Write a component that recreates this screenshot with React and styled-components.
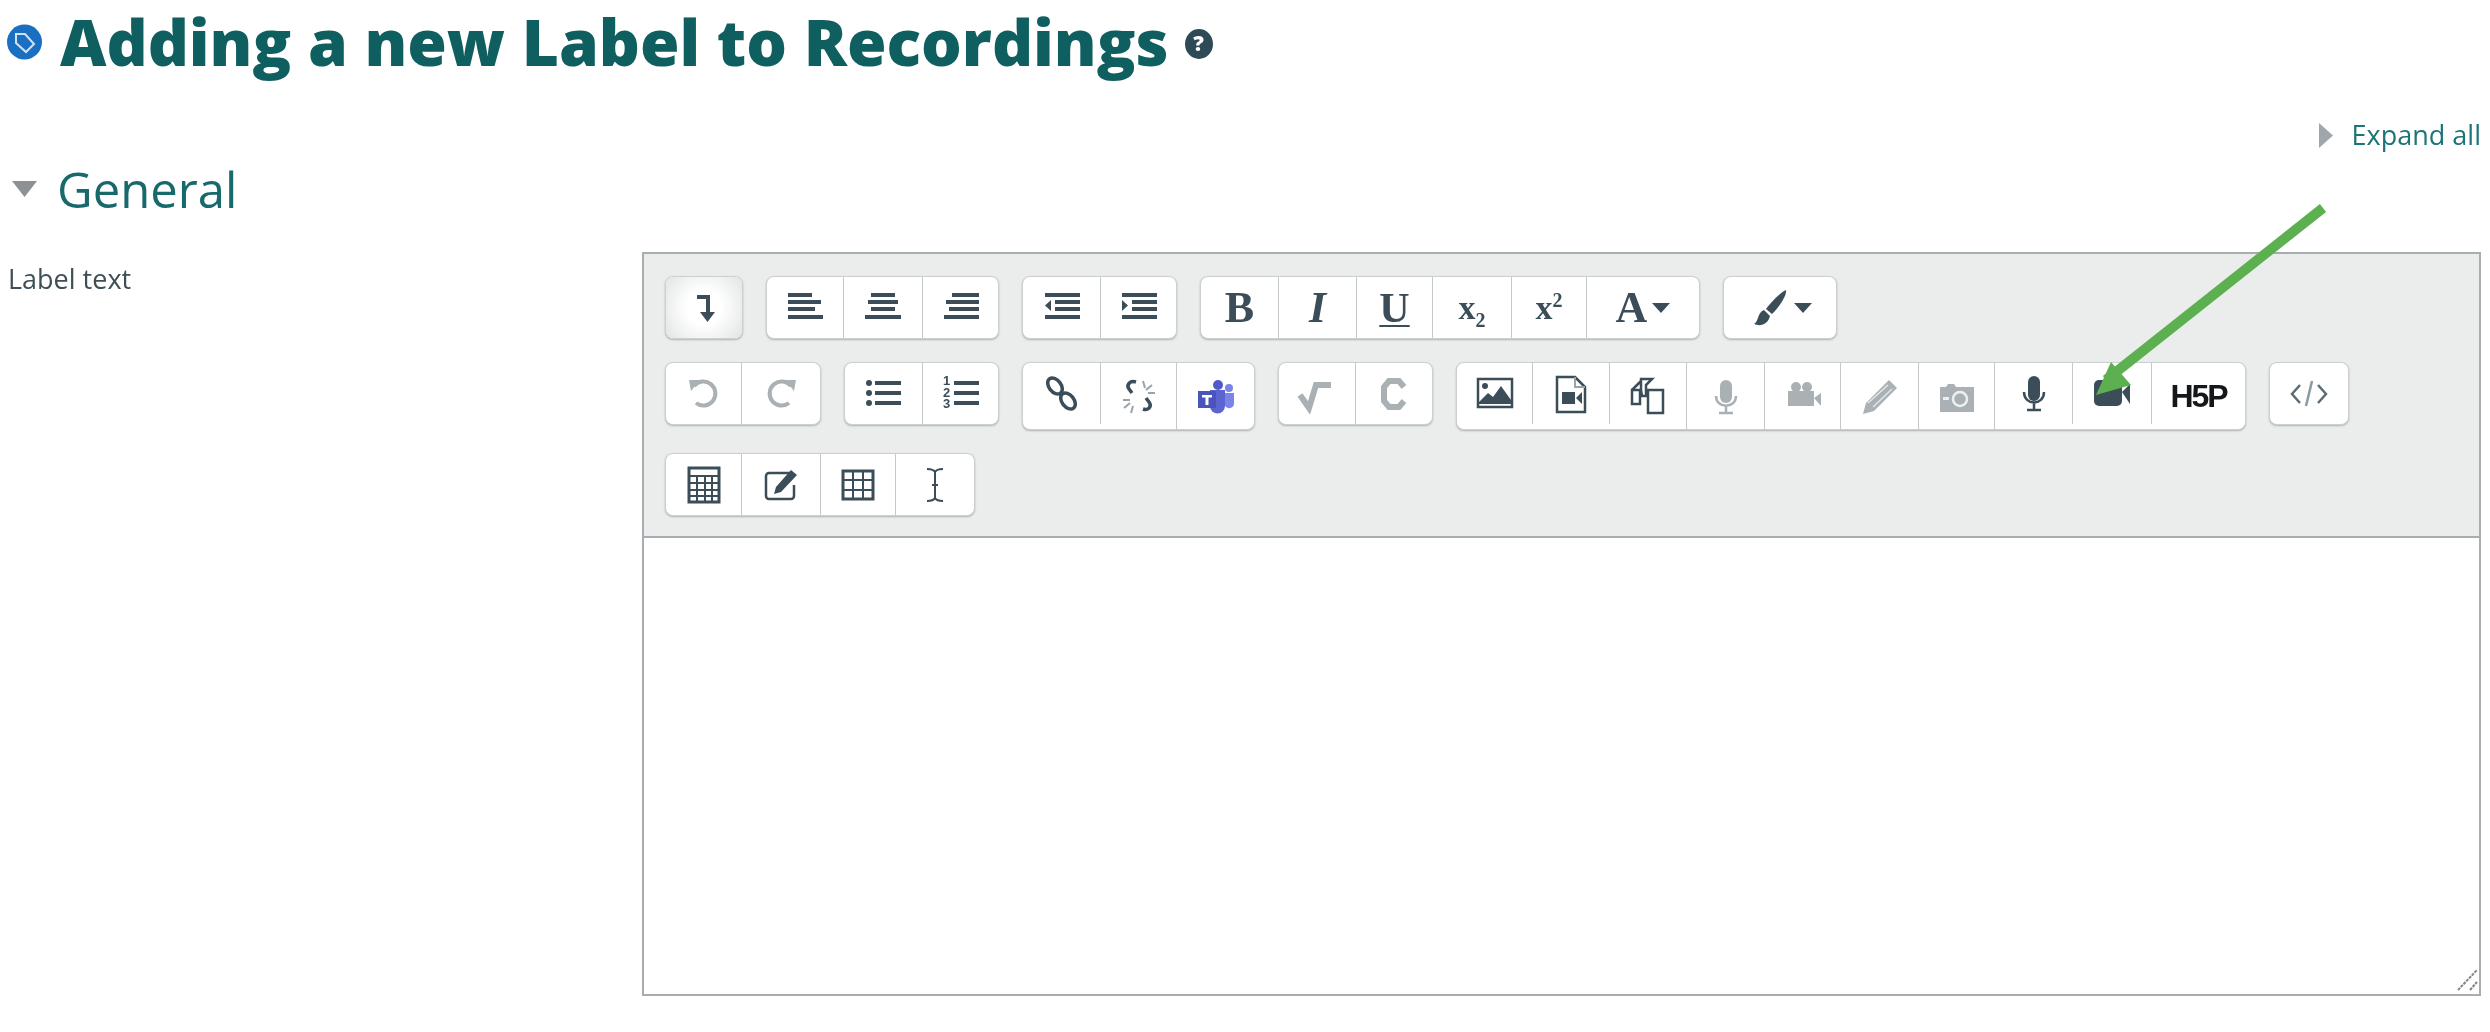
import React from 'react'
import styled, { createGlobalStyle } from 'styled-components'

const INK = '#3b4d59'
const MUTED = '#aab1b4'

const GlobalStyle = createGlobalStyle`
  html, body {
    margin: 0;
    background: #fff;
    overflow: hidden;
  }
`

const Page = styled.div`
  position: relative;
  width: 2490px;
  height: 1032px;
  padding-right: 9px;
  box-sizing: border-box;
  font-family: 'Open Sans', sans-serif;
  filter: blur(0.5px);
`

const Heading = styled.h1`
  display: flex;
  align-items: center;
  margin: 0;
  padding-left: 7px;
  font-size: 64px;
  line-height: 84px;
  font-weight: 800;
  color: #0f5f60;
`

const TitleText = styled.span`
  margin: 0 16px 0 18px;
  white-space: nowrap;
`

const HelpBadge = styled.span`
  display: flex;
  align-items: center;
  justify-content: center;
  width: 28px;
  height: 30px;
  margin-top: 3px;
  border-radius: 50%;
  background: #2f4a57;
  color: #fff;
  font-size: 21px;
  line-height: 1;
  font-weight: 800;
`

const ExpandRow = styled.div`
  display: flex;
  justify-content: flex-end;
  align-items: center;
  gap: 19px;
  margin-top: 33px;
  font-size: 27px;
  line-height: 36px;
  color: #1c7478;
`

const SectionTitle = styled.h2`
  display: flex;
  align-items: center;
  gap: 20px;
  margin: 6px 0 0;
  padding-left: 12px;
  font-size: 49px;
  line-height: 60px;
  font-weight: 400;
  color: #18696c;
`

const FormRow = styled.div`
  display: flex;
  margin-top: 33px;
`

const FieldLabel = styled.div`
  width: 642px;
  flex: none;
  padding: 8px 0 0 8px;
  box-sizing: border-box;
  font-size: 27px;
  line-height: 38px;
  color: #3f4f57;
`

const Editor = styled.div`
  flex: 1;
  height: 744px;
  display: flex;
  flex-direction: column;
  box-sizing: border-box;
  border: 2px solid #a7adb1;
`

const Toolbar = styled.div`
  display: flex;
  flex-direction: column;
  gap: 23px;
  padding: 22px 0 20px 21px;
  background: #ebeded;
  border-bottom: 2px solid #a7adb1;
`

const ToolRow = styled.div`
  display: flex;
  align-items: flex-start;
  gap: 23px;
`

const Group = styled.div`
  display: flex;
  height: ${(p) => (p.$tall ? 68 : 63)}px;
  box-sizing: border-box;
  background: #fff;
  border: 1px solid #cdd0d1;
  border-radius: 8px;
  box-shadow: 0 1px 2px rgba(60, 70, 75, 0.35);
  overflow: hidden;
`

const Tool = styled.div`
  display: flex;
  align-items: center;
  justify-content: center;
  gap: 5px;
  flex: none;
  height: ${(p) => (p.$short ? '61px' : 'auto')};
  box-sizing: border-box;
  border-right: 1px solid #c4c8ca;
  color: ${INK};
  background: ${(p) =>
    p.$active ? 'radial-gradient(circle, #ffffff 35%, #e2e4e4 100%)' : 'transparent'};

  &:last-child {
    border-right: none;
  }
`

const SerifGlyph = styled.span`
  font-family: 'Liberation Serif', serif;
  font-size: ${(p) => p.$size || 44}px;
  line-height: 1;
  font-weight: ${(p) => (p.$italic ? 700 : 700)};
  font-style: ${(p) => (p.$italic ? 'italic' : 'normal')};
  text-decoration: ${(p) => (p.$under ? 'underline' : 'none')};
  text-decoration-thickness: 2px;
  text-underline-offset: 3px;
  color: ${INK};

  sub, sup {
    font-size: 20px;
    line-height: 0;
  }
`

const LogoText = styled.span`
  font-family: 'Liberation Sans', sans-serif;
  font-size: 32px;
  font-weight: 700;
  letter-spacing: -2px;
  color: #14181b;
`

const Caret = styled.span`
  width: 0;
  height: 0;
  border-left: 9px solid transparent;
  border-right: 9px solid transparent;
  border-top: 10px solid ${INK};
`

const EditArea = styled.div`
  position: relative;
  flex: 1;
  background: #fff;
`

const ResizeGrip = styled.svg`
  position: absolute;
  right: 1px;
  bottom: 3px;
`

const ArrowLayer = styled.svg`
  position: absolute;
  left: 0;
  top: 0;
  pointer-events: none;
`

const Ico = ({ children, size = 40 }) => (
  <svg width={size} height={size} viewBox="0 0 40 40">
    {children}
  </svg>
)

const Bars = ({ rows, color = INK }) =>
  rows.map(([x, y, w], i) => <rect key={i} x={x} y={y} width={w} height="4" fill={color} />)

const icons = {
  collapse: (
    <Ico>
      <path d="M13 9h11v17" fill="none" stroke={INK} strokeWidth="4" />
      <path d="M16 24h15l-7.500 10z" fill={INK} />
    </Ico>
  ),
  alignLeft: <Ico><Bars rows={[[3, 5, 24], [3, 12, 33], [3, 19, 27], [3, 27, 35]]} /></Ico>,
  alignCenter: <Ico><Bars rows={[[8, 5, 24], [5, 12, 30], [8, 19, 24], [2, 27, 36]]} /></Ico>,
  alignRight: <Ico><Bars rows={[[11, 5, 27], [5, 12, 33], [8, 19, 30], [3, 27, 35]]} /></Ico>,
  outdent: (
    <Ico>
      <Bars rows={[[3, 5, 35], [13, 12, 25], [13, 19, 25], [3, 27, 35]]} />
      <path d="M9 12v11l-6-5.500z" fill={INK} />
    </Ico>
  ),
  indent: (
    <Ico>
      <Bars rows={[[3, 5, 35], [13, 12, 25], [13, 19, 25], [3, 27, 35]]} />
      <path d="M3 12v11l6-5.500z" fill={INK} />
    </Ico>
  ),
  undo: (
    <Ico>
      <path d="M10 12a12 12 0 1 1 2 17" fill="none" stroke={MUTED} strokeWidth="4" />
      <path d="M5 6h11L7 17z" fill={MUTED} />
    </Ico>
  ),
  redo: (
    <Ico>
      <path d="M30 12a12 12 0 1 0-2 17" fill="none" stroke={MUTED} strokeWidth="4" />
      <path d="M35 6H24l9 11z" fill={MUTED} />
    </Ico>
  ),
  bullets: (
    <Ico>
      <Bars rows={[[11, 7, 26], [11, 17, 26], [11, 27, 26]]} />
      <circle cx="5" cy="9" r="3" fill={INK} />
      <circle cx="5" cy="19" r="3" fill={INK} />
      <circle cx="5" cy="29" r="3" fill={INK} />
    </Ico>
  ),
  numbers: (
    <Ico>
      <Bars rows={[[13, 7, 25], [13, 17, 25], [13, 27, 25]]} />
      <g fontFamily="Liberation Sans, sans-serif" fontSize="13" fontWeight="700" fill={INK}>
        <text x="2" y="11">1</text>
        <text x="2" y="23">2</text>
        <text x="2" y="34">3</text>
      </g>
    </Ico>
  ),
  link: (
    <Ico>
      <g fill="none" stroke={INK} strokeWidth="3.500">
        <ellipse cx="13" cy="12" rx="9" ry="6" transform="rotate(52 13 12)" />
        <ellipse cx="26" cy="27" rx="9" ry="6" transform="rotate(52 26 27)" />
      </g>
    </Ico>
  ),
  unlink: (
    <Ico>
      <path d="M17 6c-6-2-10 3-7 7l3 4M24 33c6 2 9-3 6-7l-3-4" fill="none" stroke={INK} strokeWidth="3.500" />
      <path d="M24 5l2 7M33 9l-6 5M36 17h-7M5 32l6-5M12 37l2-7M4 24h7" stroke="#9aa3a8" strokeWidth="2" />
    </Ico>
  ),
  teams: (
    <Ico>
      <circle cx="22" cy="9" r="5" fill="#5059c9" />
      <circle cx="33" cy="12" r="4" fill="#7b83eb" />
      <path d="M14 14h15v16a7 7 0 0 1-15 0z" fill="#5b64cf" />
      <path d="M29 17h9v11a5 5 0 0 1-9 2z" fill="#7b83eb" />
      <rect x="2" y="15" width="18" height="17" fill="#4b53bc" />
      <path d="M6 19h10v2.500h-3.500V29h-3v-7.500H6z" fill="#fff" />
    </Ico>
  ),
  sqrt: (
    <Ico>
      <path d="M3 21l9 13L19 11h15" fill="none" stroke={MUTED} strokeWidth="6" />
    </Ico>
  ),
  chem: (
    <Ico>
      <path d="M30 13l-5-6H15l-5 6v14l5 6h10l5-6" fill="none" stroke={MUTED} strokeWidth="6" />
    </Ico>
  ),
  image: (
    <Ico>
      <rect x="3" y="5" width="34" height="28" fill="none" stroke={INK} strokeWidth="2.500" />
      <circle cx="10" cy="12" r="3" fill={INK} />
      <path d="M4 28l9-9 5 4 8-11 10 14v4H4z" fill={INK} />
    </Ico>
  ),
  fileVideo: (
    <Ico>
      <path d="M6 3h18l10 10v25H6z" fill="none" stroke={INK} strokeWidth="2.500" />
      <path d="M24 3v10h10" fill="none" stroke="#9aa3a8" strokeWidth="2" />
      <rect x="11" y="18" width="13" height="12" fill={INK} />
      <path d="M25 24l6-6v12z" fill={INK} />
    </Ico>
  ),
  copy: (
    <Ico>
      <path d="M13 14V3h11l-6 6v11h-4z M4 14l9-9" fill="none" stroke={INK} strokeWidth="2.500" />
      <path d="M4 14h8v14H4z" fill="none" stroke={INK} strokeWidth="2.500" />
      <path d="M20 14h15v23H20z" fill="#fff" stroke={INK} strokeWidth="2.500" />
    </Ico>
  ),
  micOff: (
    <Ico>
      <rect x="14" y="4" width="12" height="23" rx="6" fill={MUTED} />
      <path d="M10 20c0 13 20 13 20 0M20 30v6M13 37h14" fill="none" stroke={MUTED} strokeWidth="2.500" />
    </Ico>
  ),
  videoOff: (
    <Ico>
      <circle cx="13" cy="11" r="5" fill={MUTED} />
      <circle cx="24" cy="11" r="5" fill={MUTED} />
      <rect x="5" y="15" width="26" height="15" fill={MUTED} />
      <path d="M31 22l7-5v13z" fill={MUTED} />
    </Ico>
  ),
  pencil: (
    <Ico>
      <path d="M29 4l8 8-23 23-11 3 3-11z" fill={MUTED} />
      <path d="M8 27l20-18M13 31l19-18" stroke="#e3e5e6" strokeWidth="1.500" />
    </Ico>
  ),
  camera: (
    <Ico>
      <path d="M3 11h6l2-3h6l2 3h18v25H3z" fill={MUTED} />
      <circle cx="23" cy="23" r="7" fill="none" stroke="#eef0f0" strokeWidth="2.500" />
      <rect x="6" y="21" width="6" height="3" fill="#eef0f0" />
    </Ico>
  ),
  mic: (
    <Ico>
      <rect x="14" y="2" width="12" height="25" rx="6" fill={INK} />
      <path d="M10 18c0 14 20 14 20 0M20 29v6M13 36h14" fill="none" stroke={INK} strokeWidth="2.500" />
    </Ico>
  ),
  video: (
    <Ico>
      <rect x="2" y="6" width="28" height="26" rx="5" fill={INK} />
      <path d="M30 18l8-8v20z" fill={INK} />
    </Ico>
  ),
  code: (
    <Ico>
      <path d="M11 11l-8 9 8 9M29 11l8 9-8 9" fill="none" stroke="#5b6d79" strokeWidth="2.500" />
      <path d="M23 7l-6 25" fill="none" stroke="#8a9aa5" strokeWidth="2.500" />
    </Ico>
  ),
  calc: (
    <Ico>
      <path d="M5 3h30v34H5z" fill="none" stroke={INK} strokeWidth="3" />
      <path d="M5 11h30M5 18h30M5 25h30M5 31h30M13 12v24M21 12v24M28 12v24" stroke={INK} strokeWidth="2" />
    </Ico>
  ),
  edit: (
    <Ico>
      <path d="M29 8H8a3 3 0 0 0-3 3v20a3 3 0 0 0 3 3h22a3 3 0 0 0 3-3V20" fill="none" stroke={INK} strokeWidth="2.500" />
      <path d="M30 5l6 5-16 17-7 2 2-7z" fill={INK} />
    </Ico>
  ),
  table: (
    <Ico>
      <path d="M5 6h30v28H5z" fill="none" stroke={INK} strokeWidth="3" />
      <path d="M5 15h30M5 25h30M15 6v28M25 6v28" stroke={INK} strokeWidth="2" />
    </Ico>
  ),
  cursor: (
    <Ico>
      <path d="M12 4c5 0 7 1 8 3 1-2 3-3 8-3M12 36c5 0 7-1 8-3 1 2 3 3 8 3M20 7v26M17 20h6" fill="none" stroke={INK} strokeWidth="2" />
    </Ico>
  ),
  brush: (
    <Ico>
      <path d="M37 2c1 6-8 18-14 24l-6-5C22 14 31 5 37 2z" fill={INK} />
      <path d="M15 22l6 6c-2 8-9 11-16 8 5-3 3-11 10-14z" fill={INK} />
    </Ico>
  ),
}

const rows = [
  [
    [{ w: 76, active: true, icon: icons.collapse }],
    [
      { w: 77, icon: icons.alignLeft },
      { w: 79, icon: icons.alignCenter },
      { w: 75, icon: icons.alignRight },
    ],
    [
      { w: 78, icon: icons.outdent },
      { w: 75, icon: icons.indent },
    ],
    [
      { w: 78, icon: <SerifGlyph>B</SerifGlyph> },
      { w: 78, icon: <SerifGlyph $italic>I</SerifGlyph> },
      { w: 76, icon: <SerifGlyph $under $size={42}>U</SerifGlyph> },
      { w: 79, icon: <SerifGlyph $size={34}>x<sub>2</sub></SerifGlyph> },
      { w: 75, icon: <SerifGlyph $size={34}>x<sup>2</sup></SerifGlyph> },
      { w: 112, icon: <><SerifGlyph>A</SerifGlyph><Caret /></> },
    ],
    [{ w: 112, icon: <>{icons.brush}<Caret /></> }],
  ],
  [
    [
      { w: 76, icon: icons.undo },
      { w: 78, icon: icons.redo },
    ],
    [
      { w: 78, icon: icons.bullets },
      { w: 75, icon: icons.numbers },
    ],
    [
      { w: 78, short: true, icon: icons.link },
      { w: 76, icon: icons.unlink },
      { w: 77, icon: icons.teams },
    ],
    [
      { w: 77, icon: icons.sqrt },
      { w: 76, icon: icons.chem },
    ],
    [
      { w: 76, short: true, icon: icons.image },
      { w: 77, short: true, icon: icons.fileVideo },
      { w: 77, icon: icons.copy },
      { w: 78, icon: icons.micOff },
      { w: 76, icon: icons.videoOff },
      { w: 78, icon: icons.pencil },
      { w: 76, icon: icons.camera },
      { w: 78, short: true, icon: icons.mic },
      { w: 79, short: true, icon: icons.video },
      { w: 93, icon: <LogoText>H5P</LogoText> },
    ],
    [{ w: 78, icon: icons.code }],
  ],
  [
    [
      { w: 76, icon: icons.calc },
      { w: 79, icon: icons.edit },
      { w: 75, icon: icons.table },
      { w: 78, icon: icons.cursor },
    ],
  ],
]

const TagIcon = () => (
  <svg width="35" height="36" viewBox="0 0 35 36">
    <circle cx="17.500" cy="18" r="17.500" fill="#1b6fc2" />
    <path d="M9 10h9l9 10-8 8-10-9z" fill="none" stroke="#cfe3f7" strokeWidth="2" />
  </svg>
)

const Triangle = ({ dir }) =>
  dir === 'down' ? (
    <svg width="25" height="16" viewBox="0 0 25 16">
      <path d="M0 0h25L12.500 16z" fill="#8b9195" />
    </svg>
  ) : (
    <svg width="14" height="25" viewBox="0 0 14 25">
      <path d="M0 0l14 12.500L0 25z" fill="#a0a6aa" />
    </svg>
  )

const App = () => (
  <Page>
    <GlobalStyle />
    <Heading>
      <TagIcon />
      <TitleText>Adding a new Label to Recordings</TitleText>
      <HelpBadge>?</HelpBadge>
    </Heading>
    <ExpandRow>
      <Triangle dir="right" />
      Expand all
    </ExpandRow>
    <SectionTitle>
      <Triangle dir="down" />
      General
    </SectionTitle>
    <FormRow>
      <FieldLabel>Label text</FieldLabel>
      <Editor>
        <Toolbar>
          {rows.map((row, r) => (
            <ToolRow key={r}>
              {row.map((group, g) => (
                <Group key={g} $tall={group.length > 2 && r === 1}>
                  {group.map((tool, t) => (
                    <Tool key={t} $active={tool.active} $short={tool.short} style={{ width: tool.w }}>
                      {tool.icon}
                    </Tool>
                  ))}
                </Group>
              ))}
            </ToolRow>
          ))}
        </Toolbar>
        <EditArea>
          <ResizeGrip width="22" height="24" viewBox="0 0 22 24">
            <path d="M2 23L21 3M14 23l7-8" stroke="#7f8588" strokeWidth="2" strokeDasharray="3 1" />
          </ResizeGrip>
        </EditArea>
      </Editor>
    </FormRow>
    <ArrowLayer width="2490" height="1032" viewBox="0 0 2490 1032">
      <path d="M2323 208L2106 380" stroke="#5cb050" strokeWidth="10" />
      <path d="M2096 395L2111 362L2131 385z" fill="#5cb050" />
    </ArrowLayer>
  </Page>
)

export default App
